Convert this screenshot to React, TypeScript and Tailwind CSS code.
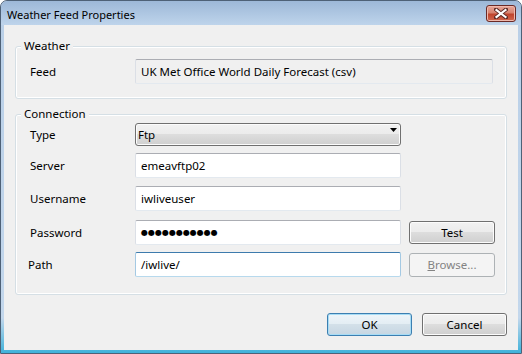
import React from "react";

const font = { fontFamily: '"Noto Sans", "Open Sans", sans-serif' };

const textbox =
  "h-[25px] rounded-[2px] border border-t-[#abadb3] border-x-[#dbdfe6] border-b-[#e3e9ef] bg-white flex items-center pl-[5px] text-black";

const btnFace =
  "h-[23px] rounded-[3px] border border-[#707070] shadow-[inset_0_0_0_1px_#fcfcfc] bg-[linear-gradient(to_bottom,#f2f2f2_0%,#ebebeb_50%,#dddddd_50%,#cfcfcf_100%)] flex items-center text-black";

function Row({
  label,
  labelPad = "pl-[2px]",
  mt,
  children,
}: {
  label: string;
  labelPad?: string;
  mt: string;
  children: React.ReactNode;
}) {
  return (
    <div className={`flex items-center ${mt}`}>
      <div className={`w-[107px] ${labelPad}`}>{label}</div>
      {children}
    </div>
  );
}

export default function App() {
  return (
    <div
      className="w-[522px] h-[354px] flex flex-col rounded-t-[7px] border border-[#4e6177] bg-[linear-gradient(to_bottom,#b9cfe7_0%,#c3d7ec_90%,#3fb2da_100%)] text-[11.5px] leading-[16px] text-black overflow-hidden"
      style={font}
    >
      {/* title bar */}
      <div className="h-[24px] flex items-start justify-between bg-[linear-gradient(to_bottom,#9db8d8,#bed4eb)] rounded-t-[6px]">
        <div className="pl-[6px] pt-[6px] text-[11px] leading-[16px] text-black">
          Weather Feed Properties
        </div>
        <div className="mt-[4px] mr-[5px] w-[30px] h-[17px] rounded-[3px] border border-[#6b2a26] bg-[linear-gradient(to_bottom,#e7a699_0%,#d7836f_45%,#c0442c_55%,#d1684f_100%)] shadow-[inset_0_0_0_1px_#efb9ad] flex items-center justify-center">
          <svg width="14" height="11" viewBox="0 0 14 11">
            <path
              d="M2 1.5 L12 9.5 M12 1.5 L2 9.5"
              stroke="#5b2a25"
              strokeWidth="4"
              strokeLinecap="square"
            />
            <path
              d="M2.5 2 L11.5 9 M11.5 2 L2.5 9"
              stroke="#ffffff"
              strokeWidth="2.2"
              strokeLinecap="square"
            />
          </svg>
        </div>
      </div>

      {/* body */}
      <div className="flex-1 mx-[3px] mb-[3px] bg-[#f0f0f0] flex flex-col px-[11px]">
        {/* Weather group */}
        <fieldset className="mt-[14px] rounded-[3px] border border-[#d5dfe5] shadow-[inset_0_0_0_1px_#ffffff] pl-[12px] pt-[6px] pb-[14px]">
          <legend className="ml-[-7px] px-[3px] bg-[#f0f0f0] leading-[14px]">Weather</legend>
          <div className="flex items-center">
            <div className="w-[107px] pl-[2px]">Feed</div>
            <div className="h-[25px] w-[358px] rounded-[2px] border border-t-[#abadb3] border-x-[#dbdfe6] border-b-[#e3e9ef] bg-[#f0f0f0] flex items-center pl-[5px]">
              UK Met Office World Daily Forecast (csv)
            </div>
          </div>
        </fieldset>

        {/* Connection group */}
        <fieldset className="mt-[8px] rounded-[3px] border border-[#d5dfe5] shadow-[inset_0_0_0_1px_#ffffff] pl-[12px] pt-[2px] pb-[17px]">
          <legend className="ml-[-7px] px-[3px] bg-[#f0f0f0] leading-[14px]">Connection</legend>

          <Row label="Type" mt="mt-0">
            <div className={`${btnFace} w-[266px] justify-between pl-[2px] pr-[3px]`}>
              <span>Ftp</span>
              <svg width="7" height="4" viewBox="0 0 7 4" className="mb-[9px]">
                <path d="M0 0 H7 L3.5 4 Z" fill="#000" />
              </svg>
            </div>
          </Row>

          <Row label="Server" mt="mt-[7px]">
            <div className={`${textbox} w-[266px]`}>emeavftp02</div>
          </Row>

          <Row label="Username" mt="mt-[8px]">
            <div className={`${textbox} w-[266px]`}>iwliveuser</div>
          </Row>

          <Row label="Password" mt="mt-[9px]">
            <div className={`${textbox} w-[266px]`}>
              <span
                className="text-[8px] leading-[10px]"
                style={{ fontFamily: '"DejaVu Sans", sans-serif' }}
              >
                ●●●●●●●●●●●
              </span>
            </div>
            <div className={`${btnFace} justify-center ml-[8px] w-[86px]`}>Test</div>
          </Row>

          <Row label="Path" labelPad="pl-0" mt="mt-[7px]">
            <div className="h-[25px] w-[266px] rounded-[2px] border border-t-[#3d7bad] border-x-[#a4c9e3] border-b-[#b7d9ed] bg-white flex items-center pl-[5px]">
              /iwlive/
            </div>
            <div className="ml-[8px] w-[86px] h-[24px] rounded-[3px] border border-[#adb2b5] bg-[#f4f4f4] flex items-center justify-center text-[#838383]">
              <span>
                <span className="underline">B</span>rowse...
              </span>
            </div>
          </Row>
        </fieldset>

        {/* buttons */}
        <div className="mt-[18px] flex justify-end gap-[10px]">
          <div className="h-[23px] w-[85px] rounded-[3px] border border-[#3c7fb1] shadow-[inset_0_0_0_1px_#a7dcf5] bg-[linear-gradient(to_bottom,#eef5f9_0%,#e3edf3_50%,#d3e0e9_50%,#c6d6e2_100%)] flex items-center justify-center">
            OK
          </div>
          <div className={`${btnFace} justify-center w-[85px]`}>Cancel</div>
        </div>
      </div>
    </div>
  );
}
